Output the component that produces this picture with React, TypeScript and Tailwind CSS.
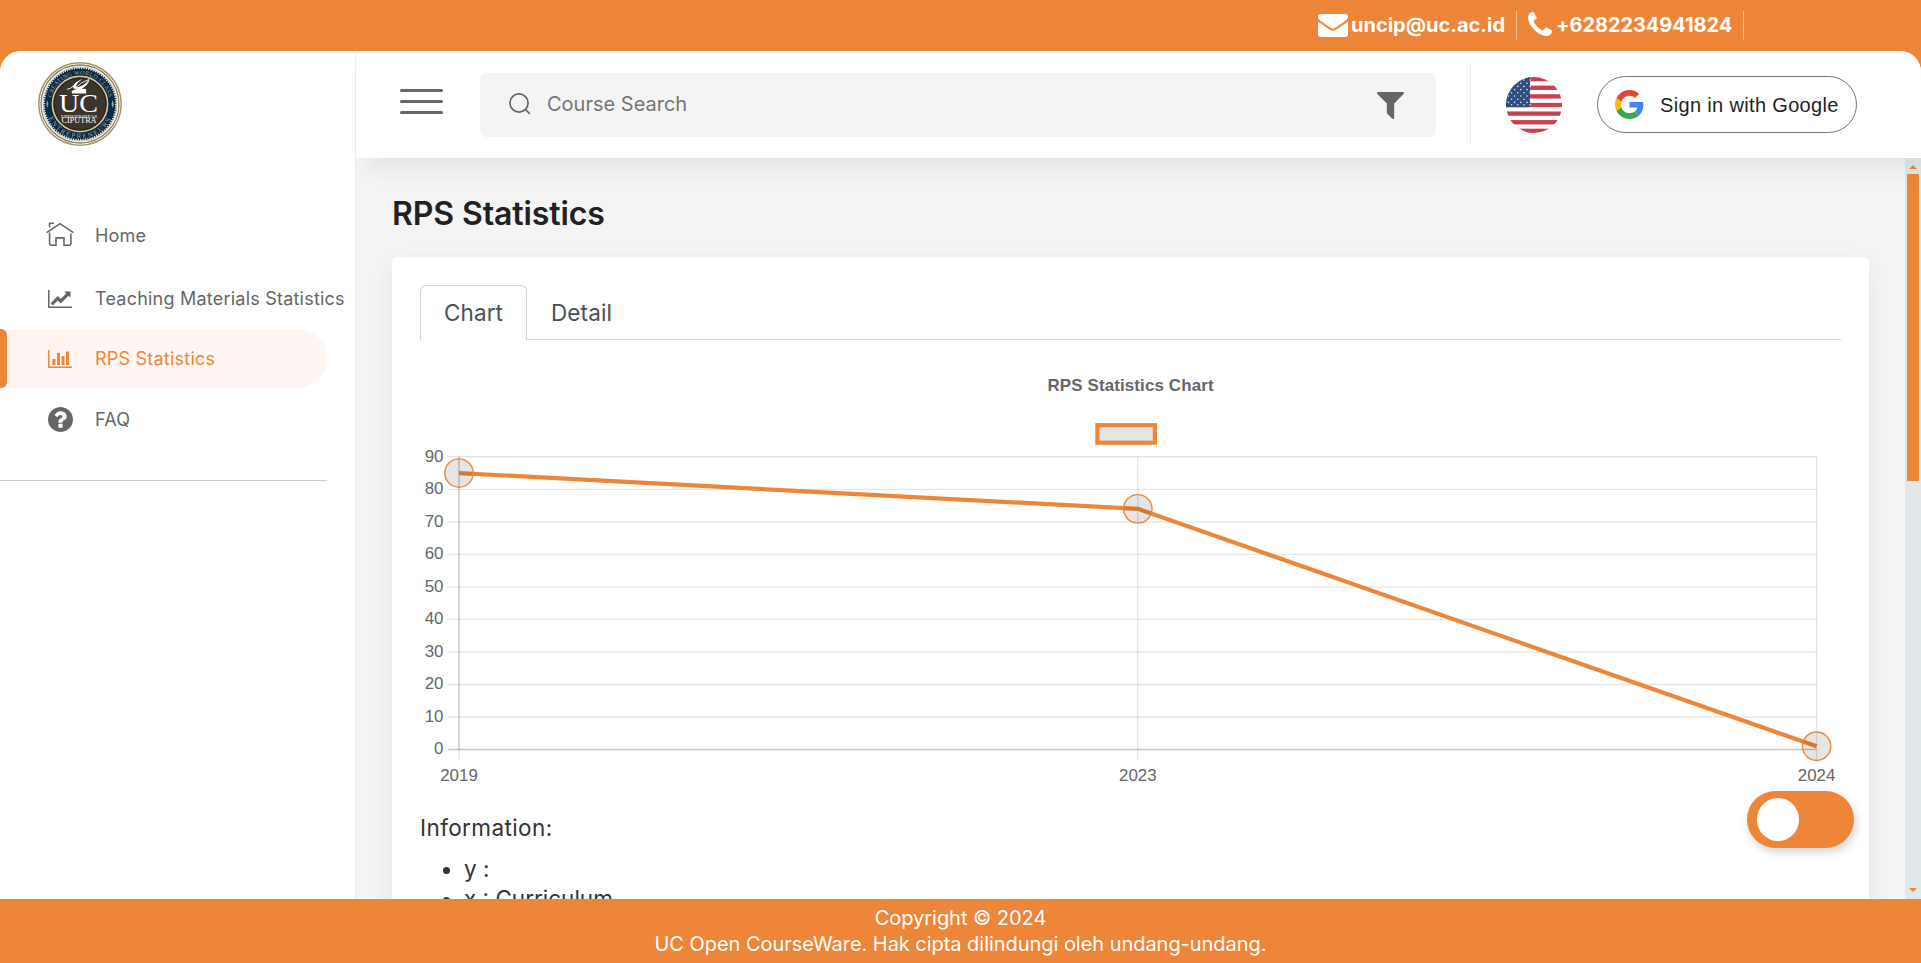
import React from "react";

type IconProps = { className?: string };

const EnvelopeIcon = ({ className }: IconProps) => (
  <svg className={className} viewBox="0 256 1792 1408" fill="currentColor" preserveAspectRatio="none">
    <path d="M1792 710v794q0 66-47 113t-113 47h-1472q-66 0-113-47t-47-113v-794q44 49 101 87 362 246 497 345 57 42 92.5 65.5t94.5 48 110 24.5h2q51 0 110-24.5t94.5-48 92.5-65.5q170-123 498-345 57-39 100-87zm0-294q0 79-49 151t-122 123q-376 261-468 325-10 7-42.5 31t-54 38.5-52 32.5-57.5 27-50 9h-2q-23 0-50-9t-57.5-27-52-32.5-54-38.5-42.5-31q-91-64-262-182.5t-205-142.5q-62-42-117-115.5t-55-136.5q0-78 41.5-130t118.5-52h1472q65 0 112.5 47t47.5 113z" />
  </svg>
);

const PhoneIcon = ({ className }: IconProps) => (
  <svg className={className} viewBox="192 128 1408 1408" fill="currentColor">
    <path d="M1600 1240q0 27-10 70.5t-21 68.5q-21 50-122 106-94 51-186 51-27 0-53-3.5t-57.5-12.5-47-14.5-55.5-20.5-49-18q-98-35-175-83-127-79-264-216t-216-264q-48-77-83-175-3-9-18-49t-20.5-55.5-14.5-47-12.5-57.5-3.5-53q0-92 51-186 56-101 106-122 25-11 68.5-21t70.5-10q14 0 21 3 18 6 53 76 11 19 30 54t35 63.5 31 53.5q3 4 17.5 25t21.5 35.5 7 28.5q0 20-28.5 50t-62 55-62 53-28.5 46q0 9 5 22.5t8.5 20.5 14 24 11.5 19q76 137 174 235t235 174q2 1 19 11.5t24 14 20.5 8.5 22.5 5q18 0 46-28.5t53-62 55-62 50-28.5q14 0 28.5 7t35.5 21.5 25 17.5q25 15 53.5 31t63.5 35 54 30q70 35 76 53 3 7 3 21z" />
  </svg>
);

const FilterIcon = ({ className }: IconProps) => (
  <svg className={className} viewBox="191 256 1410 1408" fill="currentColor">
    <path d="M1595 295q17 41-14 70l-493 493v742q0 42-39 59-13 5-25 5-27 0-45-19l-256-256q-19-19-19-45v-486l-493-493q-31-29-14-70 17-39 59-39h1280q42 0 59 39z" />
  </svg>
);

const LineChartIcon = ({ className }: IconProps) => (
  <svg className={className} viewBox="0 128 2048 1536" fill="currentColor">
    <path d="M2048 1536v128h-2048v-1536h128v1408h1920zm-128-1248v435q0 21-19.5 29.5t-35.5-7.5l-121-121-633 633q-10 10-23 10t-23-10l-233-233-416 416-192-192 585-585q10-10 23-10t23 10l233 233 464-464-121-121q-16-16-7.5-35.5t29.5-19.5h435q14 0 23 9t9 23z" />
  </svg>
);

const BarChartIcon = ({ className }: IconProps) => (
  <svg className={className} viewBox="0 128 2048 1536" fill="currentColor">
    <path d="M640 896v512h-256v-512h256zm384-512v1024h-256v-1024h256zm1024 1152v128h-2048v-1536h128v1408h1920zm-640-896v768h-256v-768h256zm384-384v1152h-256v-1152h256z" />
  </svg>
);

const QuestionIcon = ({ className }: IconProps) => (
  <svg className={className} viewBox="128 128 1536 1536" fill="currentColor">
    <path d="M1024 1376v-192q0-14-9-23t-23-9h-192q-14 0-23 9t-9 23v192q0 14 9 23t23 9h192q14 0 23-9t9-23zm256-672q0-88-55.5-163t-138.5-116-170-41q-243 0-371 213-15 24 8 42l132 100q7 6 19 6 16 0 25-12 53-68 86-92 34-24 86-24 48 0 85.5 26t37.5 59q0 38-20 61t-68 45q-63 28-115.5 86.5t-52.5 125.5v36q0 14 9 23t23 9h192q14 0 23-9t9-23q0-19 21.5-49.5t54.5-49.5q32-18 49-28.5t46-35 44.5-48 28-60.5 12.5-81zm384 192q0 209-103 385.5t-279.5 279.5-385.5 103-385.5-103-279.5-279.5-103-385.5 103-385.5 279.5-279.5 385.5-103 385.5 103 279.5 279.5 103 385.5z" />
  </svg>
);

const HomeIcon = ({ className }: IconProps) => (
  <svg className={className} viewBox="0 0 28 25" fill="none" stroke="currentColor" strokeWidth="1.6">
    <path d="M.6 10.6 14 1.6l13.4 9M3.6 5.4V1.3H8" />
    <path d="M3.6 10.5v10.7q0 2 2 2H10V15.9h8v7.3h4.9q2 0 2-2V11.6" />
  </svg>
);

const GoogleIcon = ({ className }: IconProps) => (
  <svg className={className} viewBox="0 0 48 48">
    <path fill="#EA4335" d="M24 9.5c3.54 0 6.71 1.22 9.21 3.6l6.85-6.85C35.9 2.38 30.47 0 24 0 14.62 0 6.51 5.38 2.56 13.22l7.98 6.19C12.43 13.72 17.74 9.5 24 9.5z" />
    <path fill="#4285F4" d="M46.98 24.55c0-1.57-.15-3.09-.38-4.55H24v9.02h12.94c-.58 2.96-2.26 5.48-4.78 7.18l7.73 6c4.51-4.18 7.09-10.36 7.09-17.65z" />
    <path fill="#FBBC05" d="M10.53 28.59c-.48-1.45-.76-2.99-.76-4.59s.27-3.14.76-4.59l-7.98-6.19C.92 16.46 0 20.12 0 24c0 3.88.92 7.54 2.56 10.78l7.97-6.19z" />
    <path fill="#34A853" d="M24 48c6.48 0 11.93-2.13 15.89-5.81l-7.73-6c-2.15 1.45-4.92 2.3-8.16 2.3-6.26 0-11.57-4.22-13.47-9.91l-7.98 6.19C6.51 42.62 14.62 48 24 48z" />
  </svg>
);

const FlagIcon = ({ className }: IconProps) => (
  <svg className={className} viewBox="0 0 56 56">
    <defs>
      <clipPath id="flag-disc">
        <circle cx="28" cy="28" r="28" />
      </clipPath>
    </defs>
    <g clipPath="url(#flag-disc)">
      <rect width="56" height="56" fill="#fff" />
      {[0, 1, 2, 3, 4, 5, 6].map((i) => (
        <rect key={i} y={i * 8.615} width="56" height="4.31" fill="#c8414f" />
      ))}
      <rect width="24" height="30.2" fill="#2e4c80" />
      {[3, 6.2, 9.4, 12.6, 15.8, 19, 22.2, 25.4, 27.8].map((y, r) =>
        [0, 1, 2, 3].map((c) => (
          <circle key={`${y}-${c}`} cx={(r % 2 ? 2.4 : 5.6) + c * 6.2} cy={y} r="0.8" fill="#e4e9f2" />
        ))
      )}
    </g>
  </svg>
);

const Logo = ({ className }: IconProps) => (
  <svg className={className} viewBox="0 0 84 84">
    <defs>
      <path id="seal-top" d="M12.5 42a29.5 29.5 0 0 1 59 0" />
      <path id="seal-bottom" d="M7.6 42a34.4 34.4 0 0 0 68.8 0" />
    </defs>
    <circle cx="42" cy="42" r="41.2" fill="#fff" stroke="#a3966f" strokeWidth="1.5" />
    <circle cx="42" cy="42" r="39" fill="none" stroke="#8d8056" strokeWidth="1.3" />
    <circle cx="42" cy="42" r="36.9" fill="#082a4b" stroke="#c2b894" strokeWidth="1" />
    <circle cx="42" cy="42" r="36" fill="none" stroke="#e8ebee" strokeWidth="1.8" strokeDasharray="1.2 1.2" />
    <circle cx="42" cy="42" r="27.6" fill="#3b342f" stroke="#d3c592" strokeWidth="1.7" />
    <circle cx="42" cy="42" r="26" fill="none" stroke="#241e1a" strokeWidth="1" />
    <g fill="#a9a680" fontFamily="'Liberation Serif', serif">
      <text fontSize="6" letterSpacing="0.3">
        <textPath href="#seal-top" startOffset="50%" textAnchor="middle">CREATING WORLD CLASS</textPath>
      </text>
      <text fontSize="7" letterSpacing="1.6">
        <textPath href="#seal-bottom" startOffset="50%" textAnchor="middle">ENTREPRENEURS</textPath>
      </text>
      <path d="M9.3 38l1 4-1 4-1-4zM74.7 38l1.2 4-1.2 4-1.2-4z" />
    </g>
    <path d="M34 31.5 33.6 29l5.4-2.2q-5.6.4-3.6-3.6 2.4-3.8 9.2-6.2-6 4-6.6 7 0 2 4 .6 6-2.6 8.2-6.4-.4 5-7.2 8.2l5 .6.2 2.5v2z" fill="#fff" />
    <path d="M29 27.4q4-.8 6.5-3.4m2.5 1.5q5-5.5 13-8-1 6-9 9.5" fill="none" stroke="#fff" strokeWidth=".9" />
    <g fill="#fff" textAnchor="middle" fontFamily="'Liberation Serif', serif">
      <text x="40.5" y="50.4" fontSize="26" textLength="39" lengthAdjust="spacingAndGlyphs">UC</text>
      <text x="41" y="55.6" fontSize="5" textLength="36" lengthAdjust="spacingAndGlyphs">UNIVERSITAS</text>
      <text x="41" y="61.2" fontSize="7.6" textLength="35" lengthAdjust="spacingAndGlyphs">CIPUTRA</text>
    </g>
  </svg>
);

const navItems = [
  { label: "Home", Icon: HomeIcon, icon: "ml-[46px] mb-0.5 h-[25px] w-7", row: "h-[63px]", text: "ml-[21px]" },
  { label: "Teaching Materials Statistics", Icon: LineChartIcon, icon: "ml-12 mt-px h-[18px] w-6", row: "h-[62px]", text: "ml-[23px] pt-px" },
  { label: "RPS Statistics", Icon: BarChartIcon, icon: "ml-[41px] h-[18px] w-6", row: "h-[59px]", text: "ml-[23px]", active: true },
  { label: "FAQ", Icon: QuestionIcon, icon: "ml-12 size-[25px]", row: "h-[62px]", text: "ml-[22px] pt-px" },
];

const series = [
  { year: "2019", value: 85 },
  { year: "2023", value: 74 },
  { year: "2024", value: 1 },
];

/* Plot geometry, in pixels from the chart's top left corner */
const LEFT = 39;
const STEP = 678.8;
const BASE = 389.5;
const UNIT = 3.252;
const px = (i: number) => LEFT + i * STEP;
const py = (v: number) => BASE - v * UNIT;

function RpsChart() {
  return (
    <svg className="block h-[430px] w-[1421px] overflow-visible" viewBox="0 0 1421 430" fontFamily="'Liberation Sans', Arial, sans-serif" fontSize="16.9" fill="#666">
      <text x="710.5" y="31" textAnchor="middle" fontWeight="bold" textLength="166">RPS Statistics Chart</text>
      <rect x="677.4" y="65.2" width="57.5" height="17.5" fill="#e5e5e5" stroke="#ee8639" strokeWidth="4.2" />
      {[0, 10, 20, 30, 40, 50, 60, 70, 80, 90].map((v) => (
        <g key={v}>
          <path d={`M28 ${py(v)}H${px(2)}`} stroke="#000" strokeOpacity={v === 0 ? 0.22 : 0.1} strokeWidth="1.4" />
          <text x="23.5" y={py(v) + 4.8} textAnchor="end">{v}</text>
        </g>
      ))}
      {series.map((p, i) => (
        <g key={p.year}>
          <path d={`M${px(i)} ${py(90)}V401`} stroke="#000" strokeOpacity="0.1" strokeWidth="1.4" />
          <text x={px(i)} y="421" textAnchor="middle">{p.year}</text>
        </g>
      ))}
      <path d={`M${LEFT} ${py(90)}V${BASE}`} stroke="#000" strokeOpacity="0.13" strokeWidth="1.4" />
      <path d={series.map((p, i) => `${i ? "L" : "M"}${px(i)} ${py(p.value)}`).join("")} fill="none" stroke="#ee8639" strokeWidth="4.2" strokeLinejoin="round" />
      {series.map((p, i) => (
        <circle key={p.year} cx={px(i)} cy={py(p.value)} r="14.2" fill="#000" fillOpacity="0.1" stroke="#ee8639" strokeWidth="1.4" />
      ))}
    </svg>
  );
}

function TopBar() {
  return (
    <div className="flex h-[51px] shrink-0 items-start justify-end pr-[177px] pt-[11px] text-xl font-bold text-white">
      <div className="flex h-[29px] items-center border-r border-white/50 pr-[11px]">
        <EnvelopeIcon className="h-[23px] w-[30px]" />
        <span className="ml-[3px] w-[154px] whitespace-nowrap leading-[29px]">uncip@uc.ac.id</span>
      </div>
      <div className="flex h-[29px] items-center border-r border-white/50 pl-[11px] pr-[11px]">
        <PhoneIcon className="mb-1 size-6" />
        <span className="ml-1 w-[176px] whitespace-nowrap leading-[29px] tracking-[-0.06px]">+6282234941824</span>
      </div>
    </div>
  );
}

function Sidebar() {
  return (
    <aside className="w-[356px] shrink-0 border-r border-[#eee] bg-white">
      <Logo className="ml-[38px] mt-[11px] size-[84px]" />
      <nav className="mt-[58px] text-lg tracking-[0.22px] text-[#666]">
        {navItems.map(({ label, Icon, icon, row, text, active }) => (
          <a key={label} className={`flex items-center ${row} ${active ? "w-[327px] rounded-r-full bg-[#fff6f3] text-[#ee8639]" : ""}`}>
            {active && <span className="h-full w-[7px] rounded-r-[6px] bg-[#ee8639]" />}
            <Icon className={`shrink-0 ${icon}`} />
            <span className={`whitespace-nowrap ${text}`}>{label}</span>
          </a>
        ))}
      </nav>
      <div className="mt-[30px] h-px w-[327px] bg-[#ccc]" />
    </aside>
  );
}

function Header() {
  return (
    <header className="relative z-10 flex h-[107px] shrink-0 items-start bg-white shadow-[10px_13px_20px_rgba(0,0,0,0.06)]">
      <div className="ml-11 mt-[38px] flex w-[43px] flex-col gap-[8px]">
        <span className="h-[3px] rounded-full bg-[#666]" />
        <span className="h-[3px] rounded-full bg-[#666]" />
        <span className="h-[3px] rounded-full bg-[#666]" />
      </div>
      <div className="ml-[37px] mt-[22px] flex h-16 w-[956px] items-center rounded-[6px] bg-[#f4f4f4] pl-[29px] pr-8 text-[#757575]">
        <svg className="mb-0.5 h-[22px] w-[22px]" viewBox="0 0 22 22" fill="none" stroke="#666" strokeWidth="1.7">
          <circle cx="10" cy="10" r="9.1" />
          <path d="m16.5 16.5 4.300 4.300" />
        </svg>
        <span className="mb-0.5 ml-4 text-xl">Course Search</span>
        <FilterIcon className="ml-auto size-[27px] text-[#666]" />
      </div>
      <div className="ml-[34px] mt-3.5 h-20 w-px bg-[#eaeaea]" />
      <FlagIcon className="ml-[35px] mt-[26px] size-14" />
      <button className="ml-[35px] mt-[25px] flex h-[57px] w-[260px] items-center rounded-full border border-[#747775] pl-[17px] font-['Liberation_Sans',Arial,sans-serif] text-xl tracking-[0.34px] text-[#1f1f1f]">
        <GoogleIcon className="size-[29px]" />
        <span className="ml-4 whitespace-nowrap">Sign in with Google</span>
      </button>
    </header>
  );
}

function Scrollbar() {
  return (
    <div className="flex w-4 shrink-0 flex-col items-center bg-[#e0e9ea] pb-[7px] pt-[7px]">
      <svg className="h-1 w-2" viewBox="0 0 8 4" fill="#ee8639"><path d="m0 4 4-4 4 4z" /></svg>
      <div className="mt-[5px] h-[307px] w-3 bg-[#ee8639]" />
      <svg className="mt-auto h-1 w-2" viewBox="0 0 8 4" fill="#ee8639"><path d="m0 0 4 4 4-4z" /></svg>
    </div>
  );
}

export default function App() {
  return (
    <div className="flex h-[963px] w-full flex-col overflow-hidden bg-[#ee8639] font-['Inter',sans-serif]">
      <TopBar />
      <div className="flex h-[848px] shrink-0 overflow-hidden rounded-t-[21px] bg-white">
        <Sidebar />
        <div className="flex min-w-0 flex-1 flex-col">
          <Header />
          <div className="flex h-[741px] shrink-0 overflow-hidden bg-[#f4f4f4]">
            <main className="min-w-0 flex-1 pl-9 pr-9 pt-9">
              <h1 className="text-[32px] font-semibold leading-10 tracking-[-0.1px] text-[#212121]">RPS Statistics</h1>
              <section className="mt-[23px] h-[760px] rounded-[6px] bg-white px-7 pt-7 shadow-[0_8px_24px_rgba(20,50,50,0.08)]">
                <div className="flex h-[55px] border-b border-[#ced4da] text-[22.5px] tracking-[0.1px] text-[#495057]">
                  <div className="flex h-[55px] w-[107px] items-center justify-center rounded-t-[6px] border border-b-0 border-[#ced4da] bg-white">Chart</div>
                  <div className="flex h-[55px] w-[109px] items-center justify-center">Detail</div>
                </div>
                <div className="mt-5">
                  <RpsChart />
                </div>
                <h2 className="mt-[23px] text-[22.5px] leading-[30px] tracking-[0.4px] text-[#333]">Information:</h2>
                <ul className="mt-[11px] list-disc pl-11 text-[22.5px] leading-[30px] text-[#333]">
                  <li>y :</li>
                  <li>x : Curriculum</li>
                </ul>
              </section>
            </main>
            <Scrollbar />
          </div>
        </div>
      </div>
      <footer className="flex h-16 shrink-0 flex-col items-center pt-1.5 text-xl leading-[26px] tracking-[-0.04px] text-white">
        <p>Copyright © 2024</p>
        <p>UC Open CourseWare. Hak cipta dilindungi oleh undang-undang.</p>
      </footer>
      <div className="fixed left-[1747px] top-[791px] z-20 flex h-[57px] w-[107px] items-center rounded-full bg-[#ee8639] pl-2.5 shadow-[2px_4px_10px_rgba(0,0,0,0.18)]">
        <span className="h-[43px] w-[42px] rounded-full bg-white" />
      </div>
    </div>
  );
}
